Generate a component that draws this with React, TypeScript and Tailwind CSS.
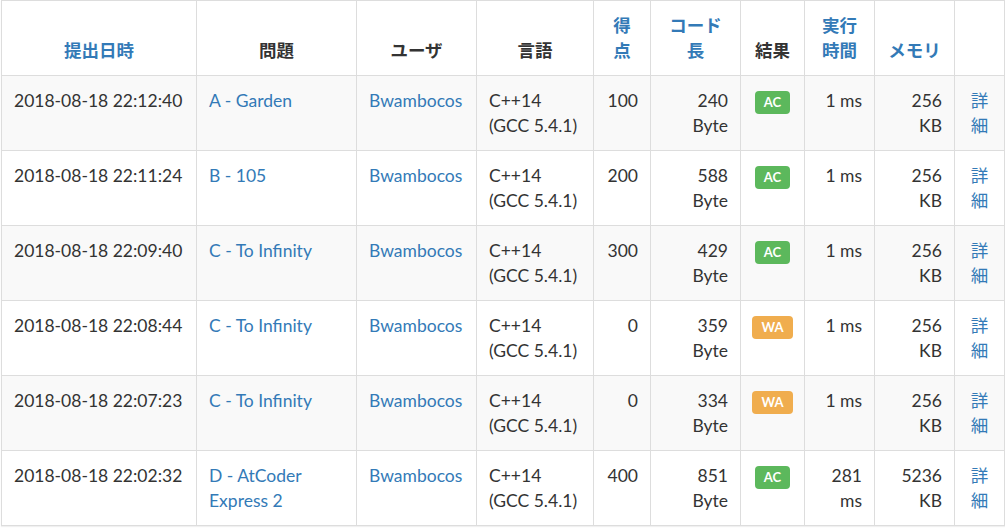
type Row = {
  time: string;
  task: string[];
  user: string;
  score: string;
  size: string;
  result: 'AC' | 'WA';
  exec: string[];
  mem: string;
};

const rows: Row[] = [
  { time: '2018-08-18 22:12:40', task: ['A - Garden'], user: 'Bwambocos', score: '100', size: '240', result: 'AC', exec: ['1 ms'], mem: '256' },
  { time: '2018-08-18 22:11:24', task: ['B - 105'], user: 'Bwambocos', score: '200', size: '588', result: 'AC', exec: ['1 ms'], mem: '256' },
  { time: '2018-08-18 22:09:40', task: ['C - To Infinity'], user: 'Bwambocos', score: '300', size: '429', result: 'AC', exec: ['1 ms'], mem: '256' },
  { time: '2018-08-18 22:08:44', task: ['C - To Infinity'], user: 'Bwambocos', score: '0', size: '359', result: 'WA', exec: ['1 ms'], mem: '256' },
  { time: '2018-08-18 22:07:23', task: ['C - To Infinity'], user: 'Bwambocos', score: '0', size: '334', result: 'WA', exec: ['1 ms'], mem: '256' },
  { time: '2018-08-18 22:02:32', task: ['D - AtCoder', 'Express 2'], user: 'Bwambocos', score: '400', size: '851', result: 'AC', exec: ['281', 'ms'], mem: '5236' },
];

const cell = 'border-r border-b border-[#ddd] px-[12px]';
const head = `${cell} flex flex-col justify-end pb-[12px] font-bold text-center`;
const body = `${cell} pt-[12px] leading-[25px]`;

export default function App() {
  return (
    <div className="w-[1005px] h-[528px] bg-white text-[17.5px] leading-[25px] text-[#333]" style={{ fontFamily: "Lato, 'Noto Sans CJK JP', sans-serif" }}>
      <div className="ml-px grid grid-cols-[195px_160px_120px_117px_57px_90px_64px_70px_80px_50px] border-l border-t border-[#ddd] w-[1004px] shadow-[0_1px_1px_rgba(0,0,0,0.06)]">
        <div className={`${head} h-[75px] text-[#337ab7]`}>提出日時</div>
        <div className={head}>問題</div>
        <div className={head}>ユーザ</div>
        <div className={head}>言語</div>
        <div className={`${head} text-[#337ab7]`}>
          <span>得</span>
          <span>点</span>
        </div>
        <div className={`${head} text-[#337ab7]`}>
          <span>コード</span>
          <span>長</span>
        </div>
        <div className={head}>結果</div>
        <div className={`${head} text-[#337ab7]`}>
          <span>実行</span>
          <span>時間</span>
        </div>
        <div className={`${head} text-[#337ab7]`}>メモリ</div>
        <div className={head}></div>

        {rows.map((r, i) => {
          const bg = i % 2 === 0 ? 'bg-[#f9f9f9]' : 'bg-white';
          return (
            <div key={i} className="contents">
              <div className={`${body} ${bg} h-[75px] whitespace-nowrap`}>{r.time}</div>
              <div className={`${body} ${bg} text-[#337ab7]`}>
                {r.task.map((t) => (
                  <div key={t}>{t}</div>
                ))}
              </div>
              <div className={`${body} ${bg} text-[#337ab7]`}>{r.user}</div>
              <div className={`${body} ${bg}`}>
                <div>C++14</div>
                <div>(GCC 5.4.1)</div>
              </div>
              <div className={`${body} ${bg} text-right`}>{r.score}</div>
              <div className={`${body} ${bg} text-right`}>
                <div>{r.size}</div>
                <div>Byte</div>
              </div>
              <div className={`${cell} ${bg} pt-[15px] flex justify-center items-start`}>
                <span
                  className={`h-[23px] px-[9px] flex items-center rounded-[4px] text-white text-[13px] font-bold leading-none ${
                    r.result === 'AC' ? 'bg-[#5cb85c]' : 'bg-[#f0ad4e]'
                  }`}
                >
                  {r.result}
                </span>
              </div>
              <div className={`${body} ${bg} text-right`}>
                {r.exec.map((t) => (
                  <div key={t}>{t}</div>
                ))}
              </div>
              <div className={`${body} ${bg} text-right`}>
                <div>{r.mem}</div>
                <div>KB</div>
              </div>
              <div className={`${body} ${bg} text-center text-[#337ab7] px-0`}>
                <div>詳</div>
                <div>細</div>
              </div>
            </div>
          );
        })}
      </div>
    </div>
  );
}
